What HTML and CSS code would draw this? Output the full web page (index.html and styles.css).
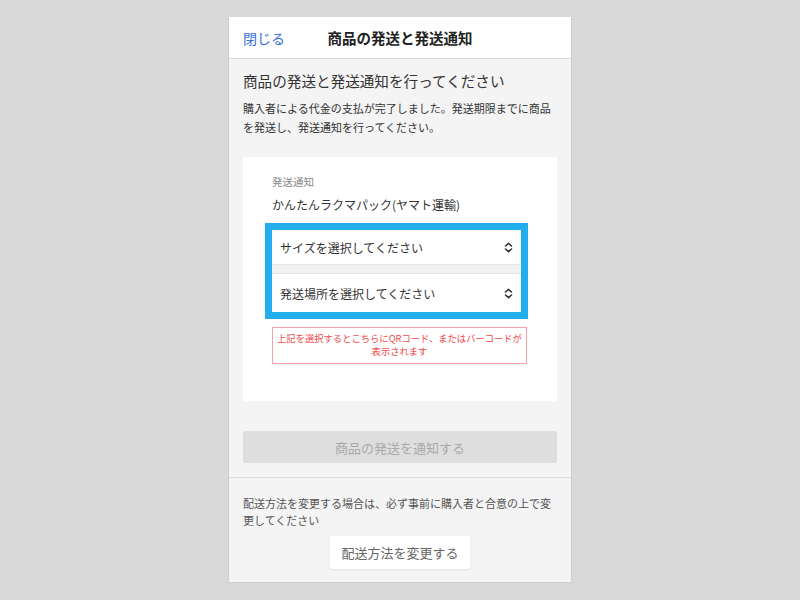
FILE: index.html
```html
<!DOCTYPE html>
<html lang="ja">
<head>
<meta charset="utf-8">
<link rel="stylesheet" href="styles.css">
</head>
<body>
<div class="phone">
  <header class="header">
    <a class="close">閉じる</a>
    <h1 class="title">商品の発送と発送通知</h1>
    <span></span>
  </header>
  <section class="main">
    <h2 class="heading">商品の発送と発送通知を行ってください</h2>
    <p class="lead">購入者による代金の支払が完了しました。発送期限までに商品を発送し、発送通知を行ってください。</p>
    <div class="card">
      <div class="label">発送通知</div>
      <div class="method">かんたんラクマパック(ヤマト運輸)</div>
      <div class="highlight">
        <div class="select first">
          <span>サイズを選択してください</span>
          <svg class="chev" width="9" height="11" viewBox="0 0 9 11"><path d="M1.5 4 L4.5 1.3 L7.5 4 M1.5 7 L4.5 9.7 L7.5 7" fill="none" stroke="#333" stroke-width="1.6" stroke-linecap="round" stroke-linejoin="round"/></svg>
        </div>
        <div class="select second">
          <span>発送場所を選択してください</span>
          <svg class="chev" width="9" height="11" viewBox="0 0 9 11"><path d="M1.5 4 L4.5 1.3 L7.5 4 M1.5 7 L4.5 9.7 L7.5 7" fill="none" stroke="#333" stroke-width="1.6" stroke-linecap="round" stroke-linejoin="round"/></svg>
        </div>
      </div>
      <div class="notice">上記を選択するとこちらにQRコード、またはバーコードが表示されます</div>
    </div>
    <button class="submit">商品の発送を通知する</button>
  </section>
  <section class="footer">
    <p class="footnote">配送方法を変更する場合は、必ず事前に購入者と合意の上で変更してください</p>
    <div class="change-wrap"><button class="change">配送方法を変更する</button></div>
  </section>
</div>
</body>
</html>
```

FILE: styles.css
```css
* { box-sizing: border-box; }
body {
  margin: 0;
  background: #d9d9d9;
  font-family: "Noto Sans CJK JP", "Noto Sans", sans-serif;
  color: #333;
}
.phone {
  width: 344px;
  height: 566px;
  margin: 17px auto 0;
  background: #f4f4f4;
  border: 1px solid #cfcfcf;
  border-top: none;
}
.header {
  height: 42px;
  background: #fff;
  border-bottom: 1px solid #dcdcdc;
  display: grid;
  grid-template-columns: 1fr auto 1fr;
  align-items: center;
  padding: 0 14px;
}
.close {
  color: #3a72d9;
  font-size: 14px;
}
.title {
  margin: 0;
  font-size: 14.5px;
  font-weight: 700;
  color: #222;
}
.main {
  padding: 12px 14px 14px;
  border-bottom: 1px solid #dcdcdc;
}
.heading {
  margin: 0;
  font-size: 14.6px;
  font-weight: 400;
  line-height: 20px;
  color: #333;
}
.lead {
  margin: 8px 0 0;
  font-size: 11px;
  line-height: 19px;
  color: #333;
}
.card {
  margin-top: 20px;
  background: #fff;
  padding: 16px 30px 37px 29px;
}
.label {
  font-size: 10.5px;
  line-height: 18px;
  color: #888;
}
.method {
  margin-top: 5px;
  font-size: 12px;
  line-height: 18px;
  color: #333;
}
.highlight {
  margin: 9px -1px 0 -7px;
  border: 7px solid #22aeea;
  background: #f2f2f2;
}
.select {
  background: #fff;
  display: flex;
  justify-content: space-between;
  align-items: center;
  padding: 0 8px 0 8px;
  font-size: 12px;
  color: #333;
}
.select.first {
  height: 35px;
  border-bottom: 1px solid #e6e6e6;
  margin-bottom: 8px;
}
.select.second {
  height: 39px;
  border-top: 1px solid #e6e6e6;
}
.chev { display: block; }
.notice {
  margin-top: 8px;
  border: 1px solid #f5a3a3;
  color: #ef4a4a;
  font-size: 9.3px;
  line-height: 13px;
  text-align: center;
  padding: 4px 4px 5px;
}
.submit {
  display: block;
  width: 100%;
  height: 32px;
  margin-top: 30px;
  border: none;
  border-radius: 2px;
  background: #dedede;
  color: #aaa;
  font-family: inherit;
  font-size: 13px;
}
.footer {
  padding: 17px 14px 0;
}
.footnote {
  margin: 0;
  font-size: 11px;
  line-height: 17px;
  color: #555;
}
.change-wrap {
  display: flex;
  justify-content: center;
  margin-top: 7px;
}
.change {
  width: 140px;
  height: 33px;
  border: none;
  border-radius: 2px;
  background: #fff;
  box-shadow: 0 1px 2px rgba(0,0,0,0.08);
  color: #666;
  font-family: inherit;
  font-size: 13px;
}
```
